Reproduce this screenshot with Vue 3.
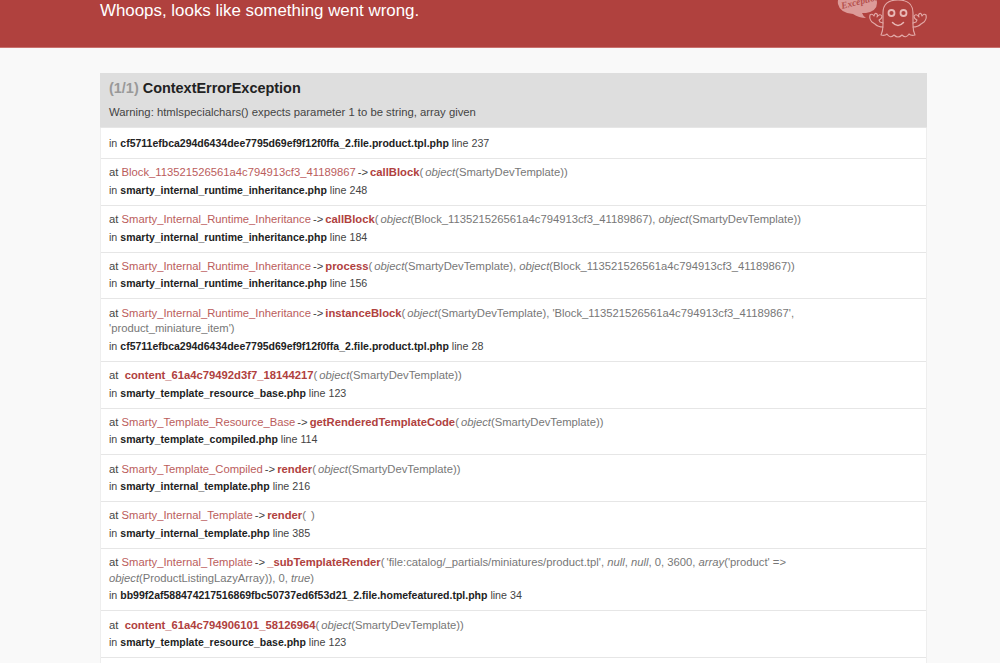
<script setup>
const rows = [
  { file: 'cf5711efbca294d6434dee7795d69ef9f12f0ffa_2.file.product.tpl.php', line: 237 },
  { cls: 'Block_113521526561a4c794913cf3_41189867', fn: 'callBlock', args: [['o', 'object'], ['t', '(SmartyDevTemplate)']], file: 'smarty_internal_runtime_inheritance.php', line: 248 },
  { cls: 'Smarty_Internal_Runtime_Inheritance', fn: 'callBlock', args: [['o', 'object'], ['t', '(Block_113521526561a4c794913cf3_41189867), '], ['o', 'object'], ['t', '(SmartyDevTemplate)']], file: 'smarty_internal_runtime_inheritance.php', line: 184 },
  { cls: 'Smarty_Internal_Runtime_Inheritance', fn: 'process', args: [['o', 'object'], ['t', '(SmartyDevTemplate), '], ['o', 'object'], ['t', '(Block_113521526561a4c794913cf3_41189867)']], file: 'smarty_internal_runtime_inheritance.php', line: 156 },
  { cls: 'Smarty_Internal_Runtime_Inheritance', fn: 'instanceBlock', args: [['o', 'object'], ['t', "(SmartyDevTemplate), 'Block_113521526561a4c794913cf3_41189867', 'product_miniature_item'"]], file: 'cf5711efbca294d6434dee7795d69ef9f12f0ffa_2.file.product.tpl.php', line: 28 },
  { fn: 'content_61a4c79492d3f7_18144217', args: [['o', 'object'], ['t', '(SmartyDevTemplate)']], file: 'smarty_template_resource_base.php', line: 123 },
  { cls: 'Smarty_Template_Resource_Base', fn: 'getRenderedTemplateCode', args: [['o', 'object'], ['t', '(SmartyDevTemplate)']], file: 'smarty_template_compiled.php', line: 114 },
  { cls: 'Smarty_Template_Compiled', fn: 'render', args: [['o', 'object'], ['t', '(SmartyDevTemplate)']], file: 'smarty_internal_template.php', line: 216 },
  { cls: 'Smarty_Internal_Template', fn: 'render', args: [], file: 'smarty_internal_template.php', line: 385 },
  { cls: 'Smarty_Internal_Template', fn: '_subTemplateRender', args: [['t', "'file:catalog/_partials/miniatures/product.tpl', "], ['o', 'null'], ['t', ', '], ['o', 'null'], ['t', ", 0, 3600, "], ['o', 'array'], ['t', "('product' => "], ['o', 'object'], ['t', '(ProductListingLazyArray)), 0, '], ['o', 'true']], file: 'bb99f2af588474217516869fbc50737ed6f53d21_2.file.homefeatured.tpl.php', line: 34 },
  { fn: 'content_61a4c794906101_58126964', args: [['o', 'object'], ['t', '(SmartyDevTemplate)']], file: 'smarty_template_resource_base.php', line: 123 }
]
</script>

<template>
  <div class="page">
    <header class="banner">
      <div class="banner-inner">
        <h1 class="title">Whoops, looks like something went wrong.</h1>
        <svg class="ghost" viewBox="0 0 92 48" aria-hidden="true">
          <path class="bubble" d="M6 -6 H30 Q41 -6 41 3 Q41 11 30 13 L26 13 Q27 16 30 18 Q23 18 17 14 Q4 13 2 4 Q1 -2 6 -6 Z" />
          <text class="bubble-text" x="6" y="9" transform="rotate(-14 6 9)">Exception</text>
          <g class="ghost-line">
            <path d="M47 25 V13 Q47 0 62 0 Q77 0 77 13 V25 Q77 31 79 35 Q75 36 73 34 Q70 39 66 35 Q62 39 58 35 Q54 39 51 34 Q49 36 45 35 Q47 31 47 25 Z" />
            <path d="M47 27 Q42 27 39 24 L36 22 Q33 19 34 15 Q36 13 38 16 Q39 12 41 14 Q42 15 41 17 Q44 13 46 16 Q46 19 43 20 L44 22 L47 23" />
            <path d="M77 27 Q82 27 85 24 L88 22 Q91 19 90 15 Q88 13 86 16 Q85 12 83 14 Q82 15 83 17 Q80 13 78 16 Q78 19 81 20 L80 22 L77 23" />
          </g>
          <path class="smile" d="M56.5 22.5 Q62 28.5 67.5 22.5" />
          <circle class="eye" cx="55.5" cy="13" r="3" />
          <circle class="eye" cx="67.5" cy="13" r="3" />
        </svg>
      </div>
    </header>

    <main class="content">
      <section class="panel">
        <div class="panel-head">
          <h2 class="exception"><span class="count">(1/1)</span> ContextErrorException</h2>
          <p class="message">Warning: htmlspecialchars() expects parameter 1 to be string, array given</p>
        </div>
        <ul class="trace">
          <li v-for="(row, i) in rows" :key="i" class="trace-row">
            <div v-if="row.fn" class="call">
              at
              <span v-if="row.cls" class="cls">{{ row.cls }}</span>
              <span v-if="row.cls" class="arrow">-&gt;</span>
              <span v-else>&nbsp;</span>
              <b class="fn">{{ row.fn }}</b><span class="args"><span class="open">(</span><template v-if="!row.args.length">&nbsp;</template><template v-for="(a, j) in row.args" :key="j"><em v-if="a[0] === 'o'">{{ a[1] }}</em><template v-else>{{ a[1] }}</template></template>)</span>
            </div>
            <div class="where">in <b>{{ row.file }}</b> line {{ row.line }}</div>
          </li>
        </ul>
      </section>
    </main>
  </div>
</template>

<style>
html, body { margin: 0; padding: 0; background: #f9f9f9; }
</style>

<style scoped>
.page {
  height: 663px;
  overflow: hidden;
  font-family: "Liberation Sans", Arial, sans-serif;
  font-size: 11.25px;
  color: #222;
  background: #f9f9f9;
}
.banner {
  height: 48px;
  background: #b0413e;
  border-bottom: 1px solid #c9716e;
  box-sizing: border-box;
}
.banner-inner {
  position: relative;
  height: 100%;
  padding-left: 100px;
  overflow: hidden;
}
.title {
  margin: 0;
  font-size: 16.9px;
  font-weight: 400;
  line-height: 22px;
  color: #fff;
}
.ghost {
  position: absolute;
  left: 836px;
  top: 0;
  width: 92px;
  height: 48px;
  overflow: hidden;
}
.bubble { fill: #dc9a98; }
.bubble-text {
  font: italic 700 9.5px "Liberation Serif", serif;
  fill: #b5504d;
}
.ghost-line path {
  fill: none;
  stroke: #e2a9a7;
  stroke-width: 1.1;
  stroke-linecap: round;
  stroke-linejoin: round;
}
.smile {
  fill: none;
  stroke: #e8b8b6;
  stroke-width: 1.5;
  stroke-linecap: round;
}
.eye {
  fill: none;
  stroke: #e8b8b6;
  stroke-width: 1.8;
}
.content {
  padding: 25px 73px 0 100px;
}
.panel {
  min-height: 640px;
  border: 1px solid #eee;
  border-width: 0 1px;
  background: #fff;
}
.panel-head {
  height: 55px;
  box-sizing: border-box;
  margin: 0 -1px;
  padding: 5px 9px 0;
  background: #dedede;
  border-bottom: 1px solid #e6e6e6;
}
.exception {
  margin: 0;
  font-size: 14.45px;
  font-weight: 700;
  line-height: 20px;
  color: #222;
}
.count { color: #999; }
.message {
  margin: 6px 0 0;
  font-size: 11.3px;
  line-height: 16px;
  color: #444;
}
.trace {
  margin: 0;
  padding: 0;
  list-style: none;
}
.trace-row {
  padding: 7px 8px 0;
  border-bottom: 1px solid #e6e6e6;
}
.call {
  margin: -0.7px 0 0.7px;
  line-height: 15.75px;
  color: #444;
}
.cls { color: #b0413e; opacity: 0.85; }
.arrow { margin: 0 2px; }
.fn { color: #b0413e; }
.args { color: #777; }
.open { margin-right: 2px; }
.args em { font-style: italic; }
.where {
  font-size: 10.7px;
  line-height: 16px;
  padding-bottom: 7px;
  color: #444;
}
.where b { color: #222; font-size: 10.5px; }
</style>
